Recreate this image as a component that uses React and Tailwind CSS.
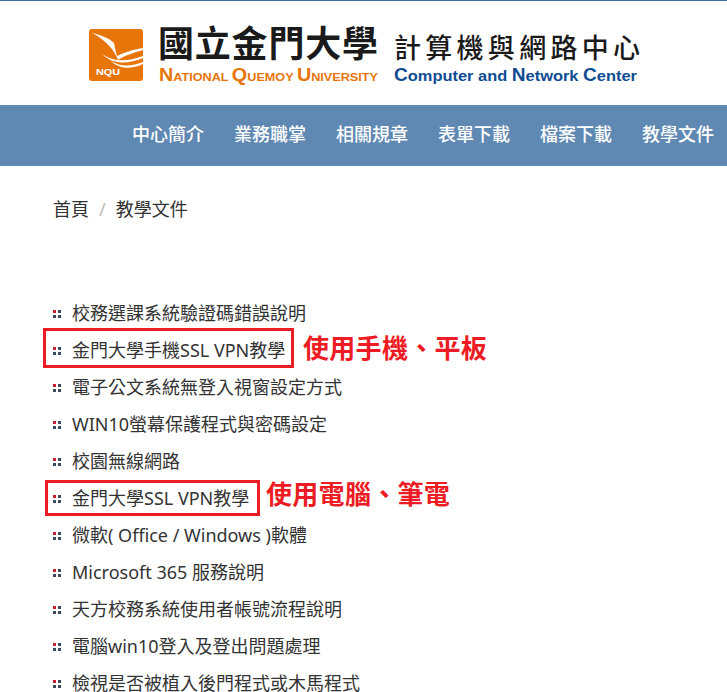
import React from 'react'

const nav = ['中心簡介', '業務職掌', '相關規章', '表單下載', '檔案下載', '教學文件']

const items = [
  { text: '校務選課系統驗證碼錯誤說明' },
  {
    text: '金門大學手機SSL VPN教學',
    box: '-left-[10px] -top-[4px] w-[251px] h-[40px]',
    note: '使用手機、平板',
    notePos: 'left-[250px] -top-[2px]',
  },
  { text: '電子公文系統無登入視窗設定方式' },
  { text: 'WIN10螢幕保護程式與密碼設定' },
  { text: '校園無線網路' },
  {
    text: '金門大學SSL VPN教學',
    box: '-left-[8px] top-0 w-[215px] h-[36px]',
    note: '使用電腦、筆電',
    notePos: 'left-[213px] -top-[4px]',
  },
  { text: '微軟( Office / Windows )軟體' },
  { text: 'Microsoft 365 服務說明' },
  { text: '天方校務系統使用者帳號流程說明' },
  { text: '電腦win10登入及登出問題處理' },
  { text: '檢視是否被植入後門程式或木馬程式' },
]

const Bullet = () => (
  <span className="grid grid-cols-2 gap-[2px] w-[8px] shrink-0">
    <i className="w-[3px] h-[3px] bg-[#c8202f]"></i>
    <i className="w-[3px] h-[3px] bg-[#3b4a5e]"></i>
    <i className="w-[3px] h-[3px] bg-[#3b4a5e]"></i>
    <i className="w-[3px] h-[3px] bg-[#3b4a5e]"></i>
  </span>
)

// school logo + wordmark, this is one picture on the real site
const Logo = () => (
  <svg width="556" height="84" viewBox="0 0 556 84" className="block shrink-0">
    <g transform="translate(0 14)">
      <g transform="translate(0 4)">
        <rect width="54" height="52" rx="3" fill="#e8750a" />
        <path d="M3 4 C12 6 20 9 25 14 C26 19 27 24 28 27 C34 24 42 21 54 19 L54 21 C43 24 35 27 29 31 C26 22 17 11 3 4Z" fill="#fff" />
        <path d="M13 25 C24 33 38 33 54 27 L54 29 C38 36 23 35 13 25Z" fill="#fff" />
        <path d="M21 31 C30 38 42 38 54 33 L54 35 C42 41 29 40 21 31Z" fill="#fff" />
        <text x="7" y="46" fontSize="8.5" fontWeight="700" fill="#fff" fontFamily="Liberation Sans" textLength="24" lengthAdjust="spacingAndGlyphs">NQU</text>
      </g>
      <text x="69" y="32" fontSize="36" fontWeight="700" fill="#1a1a1a" fontFamily="Noto Sans CJK TC" textLength="220" lengthAdjust="spacing">國立金門大學</text>
      <text x="70" y="56" fontSize="11.5" fontWeight="700" fill="#e8750a" fontFamily="Liberation Sans" textLength="219" lengthAdjust="spacingAndGlyphs">
        <tspan fontSize="18">N</tspan>ATIONAL <tspan fontSize="18">Q</tspan>UEMOY <tspan fontSize="18">U</tspan>NIVERSITY
      </text>
      <text x="305" y="33" fontSize="27" fontWeight="500" fill="#1a1a1a" fontFamily="Noto Sans CJK TC" textLength="246" lengthAdjust="spacing">計算機與網路中心</text>
      <text x="305" y="56" fontSize="15.5" fontWeight="700" fill="#0f4c92" fontFamily="Liberation Sans" textLength="243" lengthAdjust="spacingAndGlyphs">
        <tspan fontSize="18">C</tspan>omputer and <tspan fontSize="18">N</tspan>etwork <tspan fontSize="18">C</tspan>enter
      </text>
    </g>
  </svg>
)

const App = () => {
  return (
    <div className="h-[692px] overflow-hidden bg-white font-['Noto_Sans','Noto_Sans_CJK_TC',sans-serif] text-[#333]">
      <header className="h-[105px] border-t-1 border-[#3a6ea5] pl-[89px] pt-[10px]">
        <Logo />
      </header>

      <nav className="h-[61px] pb-[2px] bg-[#5f89b3] flex items-center pl-[132px] gap-[30px] overflow-hidden">
        {nav.map((n) => (
          <a key={n} className="text-[18px] font-medium text-white whitespace-nowrap shrink-0">{n}</a>
        ))}
      </nav>

      <div className="flex items-center pl-[53px] mt-[31px] h-[24px] text-[18px]">
        <span>首頁</span>
        <span className="mx-[10px] text-[#bbb]">/</span>
        <span>教學文件</span>
      </div>

      <ul className="mt-[74px] pl-[53px]">
        {items.map((item) => (
          <li key={item.text} className="h-[37px] flex items-center text-[18px] whitespace-nowrap relative">
            <Bullet />
            <span className="ml-[11px]">{item.text}</span>
            {item.box && <span className={`absolute border-[3px] border-[#ed1c24] ${item.box}`}></span>}
            {item.note && (
              <span className={`absolute leading-[37px] text-[26px] font-bold text-[#ed1c24] tracking-[0.3px] ${item.notePos}`}>{item.note}</span>
            )}
          </li>
        ))}
      </ul>
    </div>
  )
}

export default App
